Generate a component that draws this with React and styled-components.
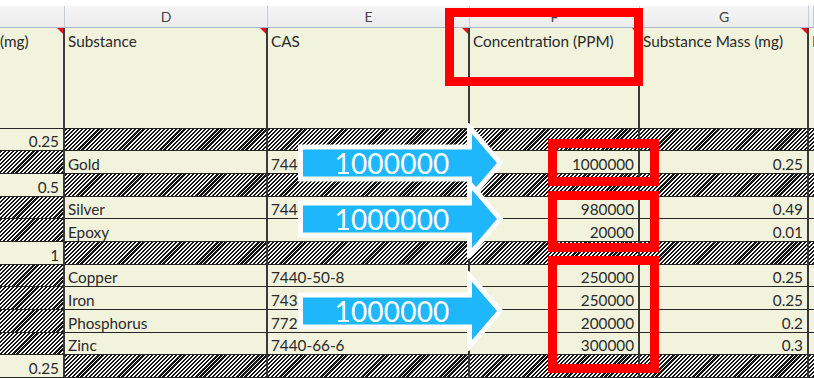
import React from "react";
import styled, { createGlobalStyle, css } from "styled-components";

const GlobalStyle = createGlobalStyle`
  html, body { margin: 0; padding: 0; background: #fff; }
  body { font-family: Lato, "Liberation Sans", sans-serif; }
`;

const COLS = "65px 203px 202px 170px 169px 1fr";
const BEIGE = "#f1f3dc";
const LINE = "#3a3a3a";

const hatch = css`
  background: repeating-linear-gradient(
    135deg,
    #141414 0 1.6px,
    #f8f8f8 1.6px 2.9px
  );
`;

const Sheet = styled.div`
  position: relative;
  width: 814px;
  height: 378px;
  overflow: hidden;
  padding-top: 6px;
  box-sizing: border-box;
  background: #fff;
`;

const LetterRow = styled.div`
  display: grid;
  grid-template-columns: ${COLS};
  height: 21px;
  background: linear-gradient(#f6f6f6, #ececec);
  border-bottom: 1px solid #a9b8ca;
  box-sizing: content-box;
`;

const Letter = styled.div`
  display: flex;
  align-items: center;
  justify-content: center;
  border-right: 1px solid #c3cdd9;
  font-size: 14px;
  color: #444;
`;

const Grid = styled.div`
  display: grid;
  grid-template-columns: ${COLS};
  grid-template-rows: 100.5px;
  grid-auto-rows: 22.7px;
`;

const Cell = styled.div`
  position: relative;
  box-sizing: border-box;
  overflow: hidden;
  white-space: nowrap;
  border-right: 2px solid ${LINE};
  border-bottom: 1px solid #262626;
  padding: 0 4px 0 3px;
  font-size: 15.3px;
  color: #2a2a2a;
  display: flex;
  align-items: flex-end;
  justify-content: ${(p) => (p.$right ? "flex-end" : "flex-start")};
  line-height: 18px;
  ${(p) => (p.$hatch ? hatch : `background: ${BEIGE};`)}
`;

const HeadCell = styled(Cell)`
  align-items: flex-start;
  padding-top: 4px;
  padding-left: ${(p) => (p.$flush ? "0" : "3px")};
  ${(p) =>
    p.$note &&
    css`
      &::after {
        content: "";
        position: absolute;
        top: 0;
        right: 0;
        border-top: 6px solid #e8101a;
        border-left: 6px solid transparent;
      }
    `}
`;

const Value = styled.span`
  padding-bottom: 0;
`;

const RedBox = styled.div`
  position: absolute;
  box-sizing: border-box;
  border: 9px solid #ff0000;
`;

const ArrowWrap = styled.div`
  position: absolute;
  left: 290px;
  width: 220px;
  height: 80px;
`;

const ArrowLabel = styled.span`
  position: absolute;
  left: 13px;
  width: 178px;
  top: 0;
  height: 80px;
  display: flex;
  align-items: center;
  justify-content: center;
  font-family: Lato, "Liberation Sans", sans-serif;
  font-size: 28px;
  color: #fff;
  letter-spacing: 0.2px;
`;

const Arrow = ({ center, label }) => (
  <ArrowWrap style={{ top: center - 40 }}>
    <svg width="220" height="80" viewBox="0 0 220 80">
      <polygon
        points="13,26.5 182,26.5 182,11 207,40 182,69 182,53.5 13,53.5"
        fill="#1fb7fb"
        stroke="#fff"
        strokeWidth="10"
        strokeLinejoin="miter"
        paintOrder="stroke"
      />
    </svg>
    <ArrowLabel>{label}</ArrowLabel>
  </ArrowWrap>
);

const rows = [
  { c: "0.25" },
  { d: "Gold", e: "7440-57-5", f: "1000000", g: "0.25" },
  { c: "0.5" },
  { d: "Silver", e: "7440-22-4", f: "980000", g: "0.49" },
  { d: "Epoxy", e: "", f: "20000", g: "0.01" },
  { c: "1" },
  { d: "Copper", e: "7440-50-8", f: "250000", g: "0.25" },
  { d: "Iron", e: "7439-89-6", f: "250000", g: "0.25" },
  { d: "Phosphorus", e: "7723-14-0", f: "200000", g: "0.2" },
  { d: "Zinc", e: "7440-66-6", f: "300000", g: "0.3" },
  { c: "0.25" },
];

const Row = ({ r }) => {
  const part = r.c !== undefined;
  if (part) {
    return (
      <>
        <Cell $right>
          <Value>{r.c}</Value>
        </Cell>
        <Cell $hatch />
        <Cell $hatch />
        <Cell $hatch />
        <Cell $hatch />
        <Cell $hatch />
      </>
    );
  }
  return (
    <>
      <Cell $hatch />
      <Cell>
        <Value>{r.d}</Value>
      </Cell>
      <Cell>
        <Value>{r.e}</Value>
      </Cell>
      <Cell $right>
        <Value>{r.f}</Value>
      </Cell>
      <Cell $right>
        <Value>{r.g}</Value>
      </Cell>
      <Cell />
    </>
  );
};

export default function App() {
  return (
    <>
      <GlobalStyle />
      <Sheet>
        <LetterRow>
          <Letter />
          <Letter>D</Letter>
          <Letter>E</Letter>
          <Letter>F</Letter>
          <Letter>G</Letter>
          <Letter />
        </LetterRow>
        <Grid>
          <HeadCell $flush $note>(mg)</HeadCell>
          <HeadCell $note>Substance</HeadCell>
          <HeadCell $note>CAS</HeadCell>
          <HeadCell $note>Concentration (PPM)</HeadCell>
          <HeadCell $note>Substance Mass (mg)</HeadCell>
          <HeadCell>R</HeadCell>
          {rows.map((r, i) => (
            <Row key={i} r={r} />
          ))}
        </Grid>

        <RedBox style={{ left: 445, top: 8, width: 198, height: 78 }} />
        <RedBox style={{ left: 548, top: 139, width: 111, height: 47 }} />
        <RedBox style={{ left: 548, top: 191, width: 111, height: 61 }} />
        <RedBox style={{ left: 548, top: 256, width: 111, height: 117 }} />

        <Arrow center={163} label="1000000" />
        <Arrow center={219} label="1000000" />
        <Arrow center={311} label="1000000" />
      </Sheet>
    </>
  );
}
